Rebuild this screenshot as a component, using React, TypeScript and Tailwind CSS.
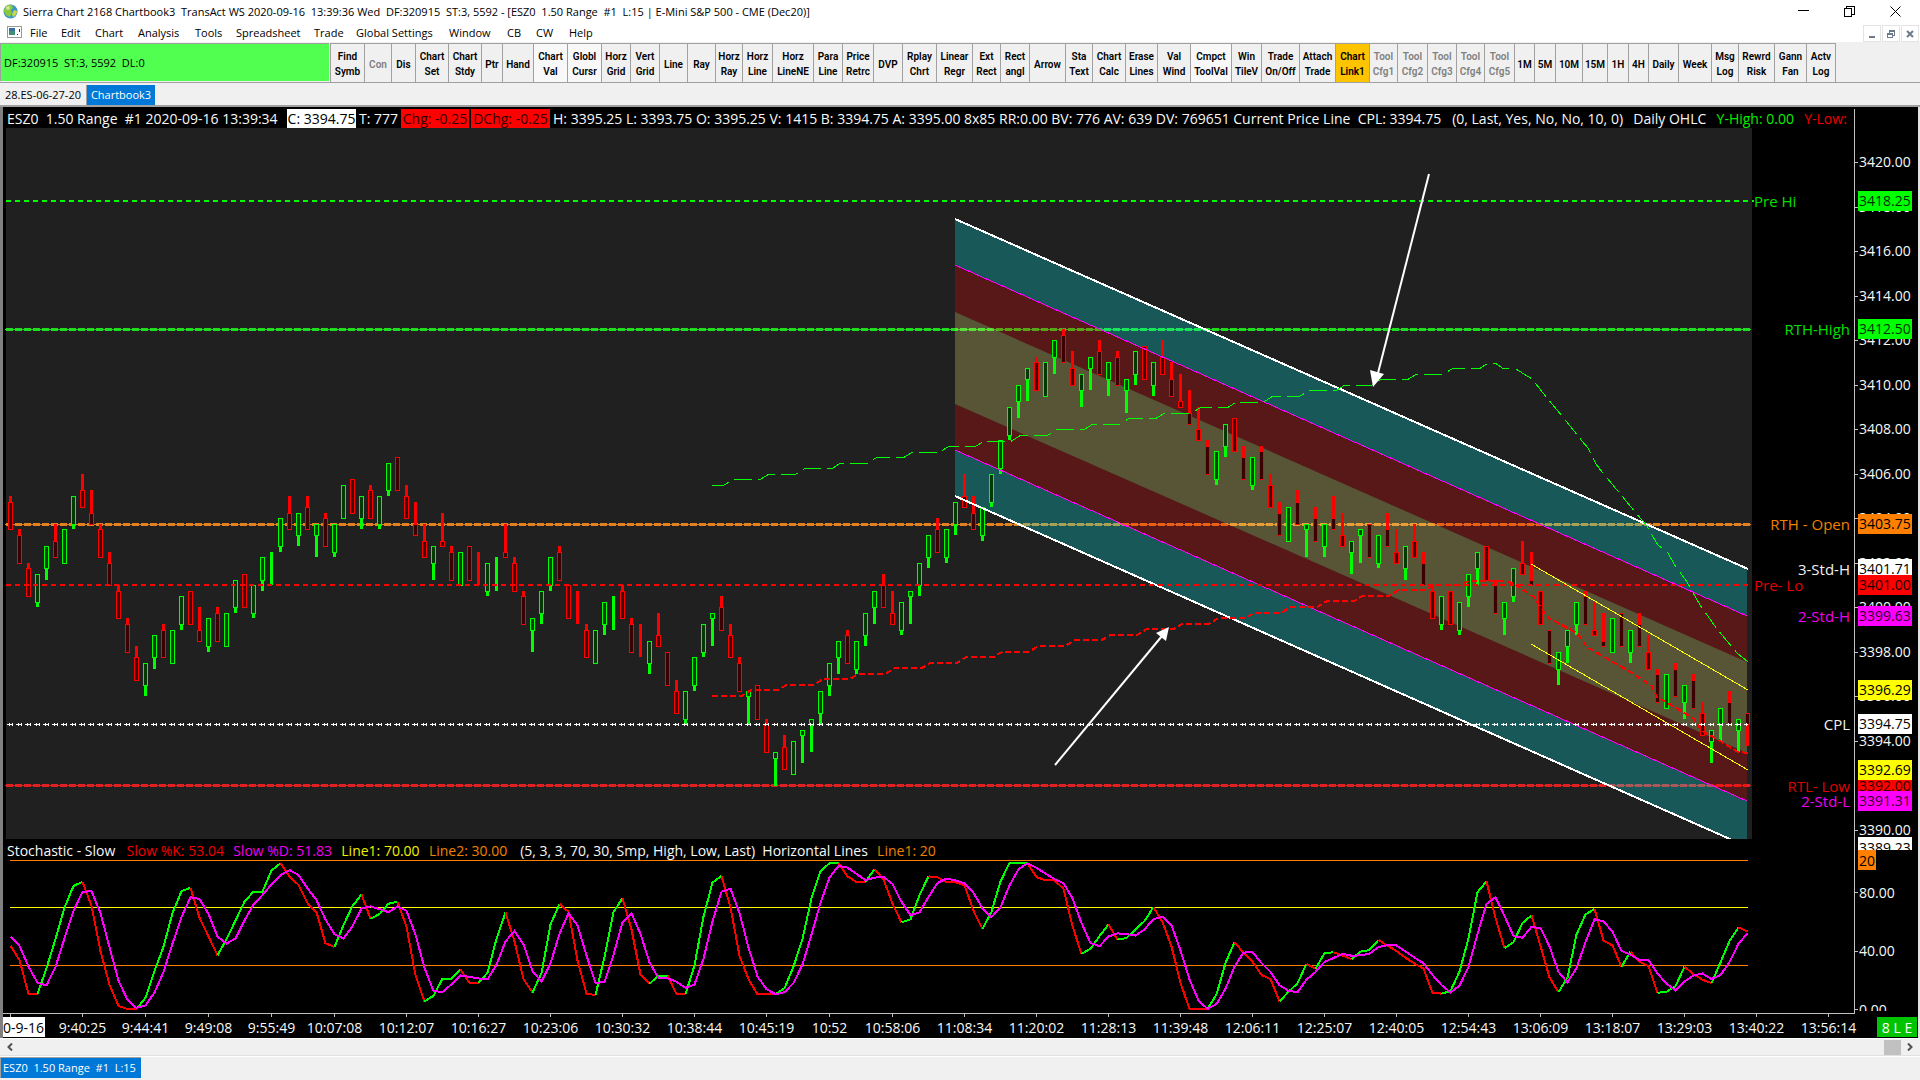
import React from "react";

/* ---------- price data: side, high (in quarter points below 3420), wick length ---------- */
const BARS =
  "R60.1 R66.1 R72.1 G74.1 G69.2 R65.3 G66.0 G60.1 R56.3 R59.4 R65.1 R70.2 R76.1 R82.1 R87.2 G90.2 G85.2 R83.1 G84.0 G78.1 " +
  "R77.0 R80.4 G82.1 R80.1 G81.0 G75.1 R74.0 G76.1 G71.2 G70.6 G64.1 R60.3 G63.2 R60.2 G65.4 R63.1 G65.1 G58.0 R57.0 G60.2 " +
  "R58.1 G60.1 G54.1 R53.0 R58.2 R61.4 R65.3 G69.3 R63.5 R69.1 G70.0 R69.0 R70.6 G72.1 G71.6 R65.5 R71.1 R77.1 G82.4 G77.2 " +
  "G71.1 R69.1 R76.0 R77.6 R83.1 G84.0 G79.2 G78.6 R76.1 R82.1 R83.6 G86.2 R81.4 R88.0 R93.2 G95.1 G89.1 G83.1 G81.5 R78.2 " +
  "R83.2 R89.1 G95.5 R94.0 R100.1 G106.5 R103.2 G104.0 G102.5 G100.5 G95.2 G90.2 G86.3 R84.1 G86.1 G81.2 G77.3 R74.2 R77.4 G79.1 " +
  "G77.5 G72.2 G67.2 R64.2 G66.1 G61.2 R56.4 R60.3 G62.1 G56.1 G50.1 G44.1 G40.3 G37.4 R35.1 G36.0 G32.3 R30.1 R34.3 G38.3 " +
  "G35.4 R32.2 G36.3 R34.1 G39.4 G34.2 R33.0 G36.2 R32.3 R36.3 R38.5 R41.4 R44.4 R50.1 G52.1 G47.2 R46.0 R51.2 G53.1 R51.1 " +
  "R56.2 R61.2 G62.0 R59.2 G65.5 R62.2 G65.2 R60.4 R63.4 G68.4 G66.5 R65.0 G67.1 R63.3 R66.4 G69.2 R65.3 R70.2 R76.1 G78.1 " +
  "R77.0 G79.1 G74.2 G70.3 R69.0 R75.1 G79.3 G73.1 R68.4 R70.5 R77.0 R84.0 G88.3 G84.3 G79.2 R77.1 R79.5 R81.5 G82.0 R81.0 " +
  "G84.2 R81.2 R85.3 R91.1 G92.0 R90.1 G94.3 R92.1 R97.2 G102.4 G98.3 R95.2 G100.4";

const bars = BARS.split(" ").map((s) => {
  const [high, wick] = s.slice(1).split(".").map(Number);
  const up = s[0] === "G";
  return { up, high, low: high + 6, wick, close: up ? high : high + 6 };
});
const allBars = [...bars, { up: false, high: 99, low: 105, wick: 4, close: 101 }];

const barX = (i: number) => 10.5 + 9 * i;
const tickY = (k: number) => Math.round(162 + k * 5.567);
const priceY = (p: number) => Math.round(162 + (3420 - p) * 22.27);
const stochY = (v: number) => 1009 - v * 1.4583;

/* ---------- slow stochastic (5, 3, 3) ---------- */
const fastK = allBars.map((b, i) => {
  const w = allBars.slice(Math.max(0, i - 4), i + 1);
  const low = Math.max(...w.map((x) => x.low));
  const high = Math.min(...w.map((x) => x.high));
  return ((low - b.close) / (low - high)) * 100;
});
const slowK = allBars.map((_, i) =>
  i < 6 ? [43.4, 33.6, 10.3, 10.3, 28, 48][i] : (fastK[i] + fastK[i - 1] + fastK[i - 2]) / 3
);
const slowD = allBars.map((_, i) =>
  i < 2 ? [49.6, 43.4][i] : (slowK[i] + slowK[i - 1] + slowK[i - 2]) / 3
);
const kRuns: { up: boolean; pts: string[] }[] = [];
slowK.forEach((v, i) => {
  if (i === 0) return;
  const prev = slowK[i - 1];
  const last = kRuns[kRuns.length - 1];
  const flat = Math.abs(v - prev) < 0.01;
  const up = flat && last ? last.up : v > prev;
  const pt = `${barX(i)},${stochY(v).toFixed(1)}`;
  if (last && last.up === up) last.pts.push(pt);
  else kRuns.push({ up, pts: [`${barX(i - 1)},${stochY(prev).toFixed(1)}`, pt] });
});
const dPoints = slowD.map((v, i) => `${barX(i)},${stochY(v).toFixed(1)}`).join(" ");

/* ---------- stepped trend lines ---------- */
function stairs(x0: number, y0: number, first: number, count: number, tail: string) {
  let d = `M${x0} ${y0}`;
  let y = y0;
  for (let i = 0; i < count; i++) {
    const x = first + 36 * i;
    d += `L${x} ${y.toFixed(1)}`;
    y -= 5.567;
    d += `L${x + 9} ${y.toFixed(1)}`;
  }
  return d + tail;
}
const upperTrend = stairs(
  712, 485.5, 723.5, 22,
  "L1495 363L1503 368.5L1515 368.5L1532 379L1543 393L1562 416L1582 441L1588 448L1596 464L1602 472L1636 513L1647 526L1653 537L1658 545L1668 553L1674 564L1687 582L1700 605L1717 629L1737 653L1748 662"
);
const lowerTrend = stairs(
  712, 696, 741.5, 20,
  "L1460 585L1470 580.5L1506 580.5L1514 584L1533 596L1541 608L1550 619L1577 633L1587 647L1627 670L1652 686L1657 697L1673 706L1694 719L1702 731L1717 739L1738 752L1749 753"
);

const priceLabels = [3420, 3418, 3416, 3414, 3412, 3410, 3408, 3406, 3404, 3402, 3400, 3398, 3396, 3394, 3390];
const priceBoxes: [number, string, string][] = [
  [3418.25, "#00ff00", "#003000"],
  [3412.5, "#00ff00", "#003000"],
  [3403.75, "#ff8000", "#000000"],
  [3401.71, "#ffffff", "#000000"],
  [3401.0, "#ff0000", "#200000"],
  [3399.63, "#ff00ff", "#300030"],
  [3396.29, "#ffff00", "#000000"],
  [3394.75, "#ffffff", "#000000"],
  [3392.0, "#ff0000", "#300000"],
  [3392.69, "#ffff00", "#000000"],
  [3391.31, "#ff00ff", "#300030"],
];
const lineNames: [string, number, string][] = [
  ["RTH-High", 3412.5, "#00e000"],
  ["RTH - Open", 3403.75, "#f08000"],
  ["3-Std-H", 3401.71, "#f0f0f0"],
  ["2-Std-H", 3399.63, "#f000f0"],
  ["CPL", 3394.75, "#f0f0f0"],
  ["RTL- Low", 3392, "#e00000"],
  ["2-Std-L", 3391.31, "#f000f0"],
];
const times: [number, string][] = [
  [8, "9:40:25"], [15, "9:44:41"], [22, "9:49:08"], [29, "9:55:49"], [36, "10:07:08"], [44, "10:12:07"],
  [52, "10:16:27"], [60, "10:23:06"], [68, "10:30:32"], [76, "10:38:44"], [84, "10:45:19"], [91, "10:52"],
  [98, "10:58:06"], [106, "11:08:34"], [114, "11:20:02"], [122, "11:28:13"], [130, "11:39:48"], [138, "12:06:11"],
  [146, "12:25:07"], [154, "12:40:05"], [162, "12:54:43"], [170, "13:06:09"], [178, "13:18:07"], [186, "13:29:03"],
  [194, "13:40:22"], [202, "13:56:14"],
];

function SessionLine({ y, color }: { y: number; color: string }) {
  return (
    <g stroke={color} fill="none">
      <path d={`M5 ${y + 0.5}H1751`} strokeWidth="1" />
      <path d={`M6 ${y + 0.5}H1751`} strokeWidth="3" strokeDasharray="7 2" />
    </g>
  );
}

function Chart() {
  return (
    <svg
      viewBox="3 128 1915 910"
      className="block h-auto w-full bg-black"
      fontFamily='"Open Sans", sans-serif'
      fontSize="14"
      role="img"
      aria-label="ESZ0 range bar chart with slow stochastic"
    >
      <defs>
        <clipPath id="plot"><rect x="6" y="128" width="1746" height="711" /></clipPath>
        <clipPath id="upperAxis"><rect x="1850" y="128" width="68" height="722" /></clipPath>
        <clipPath id="lowerAxis"><rect x="1850" y="850" width="68" height="161" /></clipPath>
      </defs>

      <rect x="6" y="128" width="1746" height="711" fill="#202020" />

      <g shapeRendering="crispEdges">
        <path d="M6 201H1754" stroke="#00ff00" strokeWidth="2" strokeDasharray="5 4" />
        <SessionLine y={329} color="#20dc20" />
        <SessionLine y={524} color="#e08020" />
        <SessionLine y={785} color="#e02020" />
      </g>

      <g clipPath="url(#plot)">
        <g fillOpacity="0.25">
          <path d="M955 218L1747 569V616L955 265ZM955 450L1747 801V847L955 496Z" fill="#00ffff" />
          <path d="M955 265L1747 616V662L955 312ZM955 404L1747 753V801L955 450Z" fill="#ff0000" />
          <path d="M955 312L1747 662V753L955 404Z" fill="#fff57d" />
        </g>

        <g shapeRendering="crispEdges" strokeWidth="1">
          {bars.map((b, i) => {
            const x = barX(i);
            const color = b.up ? "#00ff00" : "#ff0000";
            const top = b.up ? tickY(b.high) : tickY(b.high + b.wick);
            const bottom = b.up ? tickY(b.low - b.wick) : tickY(b.low);
            return (
              <g key={i}>
                {b.wick > 0 && (
                  <rect
                    x={x - 1.5}
                    y={b.up ? bottom : tickY(b.high)}
                    width="3"
                    height={b.up ? tickY(b.low) - bottom : top - tickY(b.high)}
                    fill={color}
                  />
                )}
                <rect
                  x={x - 2}
                  y={top + 0.5}
                  width="4"
                  height={bottom - top}
                  fill={b.up ? "#003c00" : "#3c0000"}
                  stroke={color}
                />
              </g>
            );
          })}
          <rect x="1745.5" y="713.5" width="4" height="11" fill="#3c0000" stroke="#ff0000" />
          <rect x="1746" y="725" width="3" height="21" fill="#ff0000" />
        </g>

        <g shapeRendering="crispEdges" fill="none">
          <path d="M955 265L1747 616M955 450L1747 801" stroke="#ff00ff" />
          <path d="M955 219L1748 569M955 496L1748 847" stroke="#ffffff" strokeWidth="2" />
          <path d="M6 585H1752" stroke="#ff0000" strokeWidth="2" strokeDasharray="5 4" />
          <path d={upperTrend} stroke="#00ff00" strokeDasharray="18 6" />
          <path d={lowerTrend} stroke="#ff0000" strokeWidth="2" strokeDasharray="6 3" />
          <path d="M1531 564L1748 690M1531 644L1748 770" stroke="#ffff00" />
          <path d="M7 724.5H1748" stroke="#ffffff" strokeDasharray="6 3" />
          <path d="M9 724.5H1748" stroke="#ffffff" strokeWidth="3" strokeDasharray="1 2 1 5" />
        </g>

        <g fill="#ffffff" stroke="none">
          <path d="M1429 174L1377 377" stroke="#ffffff" strokeWidth="2" />
          <path d="M1373 387L1370 370L1384 374Z" />
          <path d="M1055 765L1162 636" stroke="#ffffff" strokeWidth="2" />
          <path d="M1169 627L1166 641L1156 633Z" />
        </g>
      </g>

      <g shapeRendering="crispEdges" fill="none">
        <path d="M10 860.5H1748M10 965.5H1748" stroke="#ff8000" />
        <path d="M10 907.5H1748" stroke="#ffff00" />
        {kRuns.map((r, i) => (
          <polyline key={i} points={r.pts.join(" ")} stroke={r.up ? "#00ff00" : "#ff0000"} strokeWidth="2" />
        ))}
        <polyline points={dPoints} stroke="#ff00ff" strokeWidth="2" />
      </g>

      <g shapeRendering="crispEdges" stroke="#c0c0c0">
        <path d="M1854.5 128V1013M3 1013.5H1855" />
        {priceLabels.map((p) => (
          <path key={p} d={`M1855 ${priceY(p) + 0.5}h3`} />
        ))}
        {[80, 40, 0].map((v) => (
          <path key={v} d={`M1855 ${Math.round(stochY(v)) + 0.5}h3`} />
        ))}
        <path d="M10.5 1013v4" />
        {times.map(([i]) => (
          <path key={i} d={`M${barX(i)} 1013v4`} />
        ))}
      </g>

      <g fill="#f8f8f8" clipPath="url(#upperAxis)">
        {priceLabels.map((p) => (
          <text key={p} x="1859" y={priceY(p) + 5}>{p.toFixed(2)}</text>
        ))}
        {priceBoxes.map(([p, bg, fg]) => (
          <g key={p}>
            <rect x="1858" y={priceY(p) - 10} width="54" height="20" fill={bg} />
            <text x="1859" y={priceY(p) + 5} fill={fg}>{p.toFixed(2)}</text>
          </g>
        ))}
        <rect x="1858" y="837" width="54" height="20" fill="#ffffff" />
        <text x="1859" y="853" fill="#000000">3389.23</text>
      </g>
      <g fill="#f8f8f8" clipPath="url(#lowerAxis)">
        <rect x="1858" y="850" width="18" height="20" fill="#ff8000" />
        <text x="1859" y="866" fill="#000000">20</text>
        <text x="1859" y="898">80.00</text>
        <text x="1859" y="956">40.00</text>
        <text x="1859" y="1015">0.00</text>
      </g>

      <g fontSize="15">
        <text x="1754" y="207" fill="#00e000">Pre Hi</text>
        <text x="1754" y="591" fill="#e00000">Pre- Lo</text>
      </g>
      <g textAnchor="end" fontSize="15">
        {lineNames.map(([name, p, color]) => (
          <text key={name} x="1850" y={priceY(p) + 6} fill={color}>{name}</text>
        ))}
      </g>

      <g textAnchor="middle" fill="#f8f8f8">
        {times.map(([i, t]) => (
          <text key={i} x={barX(i)} y="1033">{t}</text>
        ))}
      </g>
      <rect x="3" y="1017" width="42" height="20" fill="#ffffff" />
      <text x="44" y="1033" textAnchor="end">0-9-16</text>
      <rect x="1877" y="1017" width="40" height="20" fill="#00c400" />
      <text x="1897" y="1033" textAnchor="middle" fill="#ffffff">8 L E</text>
    </svg>
  );
}

/* ---------- window chrome ---------- */
const menus: [string, string][] = [
  ["File", "w-[31px]"], ["Edit", "w-[34px]"], ["Chart", "w-[43px]"], ["Analysis", "w-[57px]"], ["Tools", "w-[41px]"],
  ["Spreadsheet", "w-[78px]"], ["Trade", "w-[42px]"], ["Global Settings", "w-[93px]"], ["Window", "w-[58px]"],
  ["CB", "w-[29px]"], ["CW", "w-[33px]"], ["Help", "w-[40px]"],
];

const tools: [string, string, string?][] = [
  ["Find Symb", "w-[34px]"], ["Con", "w-[27px]", "off"], ["Dis", "w-[24px]"], ["Chart Set", "w-[33px]"],
  ["Chart Stdy", "w-[33px]"], ["Ptr", "w-[21px]"], ["Hand", "w-[31px]"], ["Chart Val", "w-[34px]", "on"],
  ["Globl Cursr", "w-[34px]", "on"], ["Horz Grid", "w-[29px]"], ["Vert Grid", "w-[29px]"], ["Line", "w-[28px]"],
  ["Ray", "w-[28px]"], ["Horz Ray", "w-[27px]"], ["Horz Line", "w-[30px]"], ["Horz LineNE", "w-[41px]"],
  ["Para Line", "w-[29px]"], ["Price Retrc", "w-[31px]"], ["DVP", "w-[29px]"], ["Rplay Chrt", "w-[34px]"],
  ["Linear Regr", "w-[36px]"], ["Ext Rect", "w-[28px]"], ["Rect angl", "w-[29px]"], ["Arrow", "w-[36px]"],
  ["Sta Text", "w-[27px]"], ["Chart Calc", "w-[33px]"], ["Erase Lines", "w-[32px]"], ["Val Wind", "w-[33px]"],
  ["Cmpct ToolVal", "w-[41px]", "on"], ["Win TileV", "w-[30px]"], ["Trade On/Off", "w-[38px]"],
  ["Attach Trade", "w-[36px]"], ["Chart Link1", "w-[34px]", "link"], ["Tool Cfg1", "w-[28px]", "off"],
  ["Tool Cfg2", "w-[30px]", "off"], ["Tool Cfg3", "w-[29px]", "off"], ["Tool Cfg4", "w-[28px]", "off"],
  ["Tool Cfg5", "w-[30px]", "off"], ["1M", "w-[20px]"], ["5M", "w-[21px]"], ["10M", "w-[27px]"], ["15M", "w-[25px]"],
  ["1H", "w-[21px]"], ["4H", "w-[20px]"], ["Daily", "w-[30px]"], ["Week", "w-[33px]"], ["Msg Log", "w-[27px]"],
  ["Rewrd Risk", "w-[36px]"], ["Gann Fan", "w-[32px]"], ["Actv Log", "w-[29px]"],
];
const toolTone: Record<string, string> = {
  normal: "text-black",
  off: "text-[#808080]",
  on: "text-black bg-[#f8f8f8]",
  link: "text-black bg-[#ffc400]",
};

function TitleBar() {
  return (
    <div className="flex h-[22px] items-center bg-white">
      <svg className="ml-[3px] h-[15px] w-[15px]" viewBox="0 0 15 15">
        <circle cx="7.5" cy="7.5" r="7" fill="#3a93c9" />
        <path d="M3 2Q6 0 9 1L10 4L8 6L9 9L7 13Q3 12 1 8Q1 4 3 2Z" fill="#8cc63f" />
        <path d="M11 6L14 7Q14 11 10 13L9 10Z" fill="#c5d94a" />
        <circle cx="5" cy="4" r="2" fill="#e4f5c0" opacity="0.7" />
      </svg>
      <h1 className="ml-[5px] flex-1 whitespace-pre pt-px text-[11px] leading-4">
        Sierra Chart 2168 Chartbook3  TransAct WS 2020-09-16  13:39:36 Wed  DF:320915  ST:3, 5592 - [ESZ0  1.50 Range  #1  L:15 | E-Mini S&amp;P 500 - CME (Dec20)]
      </h1>
      <button aria-label="Minimize" className="flex h-full w-[46px] items-center justify-center">
        <svg className="h-[11px] w-[11px]" viewBox="0 0 11 11" shapeRendering="crispEdges"><path d="M0 4.5H11" stroke="#000" /></svg>
      </button>
      <button aria-label="Restore" className="flex h-full w-[46px] items-center justify-center">
        <svg className="h-[11px] w-[11px]" viewBox="0 0 11 11" fill="none" stroke="#000" shapeRendering="crispEdges"><path d="M.5 2.5h7v8h-7zM2.5 2.5v-2h8v8h-3" /></svg>
      </button>
      <button aria-label="Close" className="mr-[2px] flex h-full w-[46px] items-center justify-center">
        <svg className="h-[11px] w-[11px]" viewBox="0 0 11 11" stroke="#000"><path d="M.5 .5l10 10M10.5 .5l-10 10" /></svg>
      </button>
    </div>
  );
}

function MenuBar() {
  const box = "flex h-[17px] w-[18px] items-center justify-center border border-[#e4e4e4] bg-white";
  return (
    <div className="flex h-[20px] items-center bg-white">
      <svg className="ml-[7px] mr-[8px] h-[12px] w-[15px]" viewBox="0 0 15 12" shapeRendering="crispEdges">
        <rect x=".5" y=".5" width="14" height="11" fill="#fff" stroke="#9a9a9a" />
        <rect x="2" y="2" width="6" height="7" fill="#3f8f7a" />
        <rect x="2" y="2" width="6" height="3" fill="#3b6ea5" />
        <path d="M10 8.5h1M12.5 3v3" stroke="#333" />
      </svg>
      <nav className="flex flex-1 pt-[2px]">
        {menus.map(([label, w]) => (
          <button key={label} className={`${w} whitespace-nowrap text-left text-[11px] leading-4`}>{label}</button>
        ))}
      </nav>
      <div className="mr-px flex gap-px pt-[3px]">
        <button aria-label="Minimize chart" className={box}>
          <svg className="h-[8px] w-[8px]" viewBox="0 0 8 8"><path d="M1 7H7" stroke="#6b7b8c" strokeWidth="2" /></svg>
        </button>
        <button aria-label="Restore chart" className={box}>
          <svg className="h-[8px] w-[8px]" viewBox="0 0 8 8" fill="none" stroke="#6b7b8c" shapeRendering="crispEdges"><path d="M.5 3.5h5v4h-5zM0 4.5h6M2.5 3v-2.5h5v5h-2M2 1.5h6" /></svg>
        </button>
        <button aria-label="Close chart" className={box}>
          <svg className="h-[8px] w-[8px]" viewBox="0 0 8 8"><path d="M1 1l6 6M7 1l-6 6" stroke="#6b7b8c" strokeWidth="2" /></svg>
        </button>
      </div>
    </div>
  );
}

function ToolBar() {
  return (
    <div className="flex h-[41px] items-start overflow-hidden border-b border-[#a0a0a0] pt-px">
      <div className="mr-px flex h-[38px] w-[329px] shrink-0 items-center whitespace-pre border-l border-t border-[#a0a0a0] bg-[#50ff50] pl-[3px] text-[11px] leading-4">
        DF:320915  ST:3, 5592  DL:0
      </div>
      <div className="flex h-[40px] shrink-0 border-l border-t border-[#a0a0a0]">
        {tools.map(([label, w, state]) => (
          <button
            key={label}
            className={`${w} ${toolTone[state ?? "normal"]} flex shrink-0 items-center justify-center border-r border-[#a0a0a0] pt-px text-center font-[Roboto] text-[10px] font-semibold leading-[15px]`}
          >
            {label.split(" ").map((t, i) => (i === 0 ? t : <React.Fragment key={i}><br />{t}</React.Fragment>))}
          </button>
        ))}
      </div>
    </div>
  );
}

function QuoteLine() {
  return (
    <div className="flex h-[19px] bg-black text-[14px] leading-[19px] text-[#f8f8f8]">
      <div className="flex min-w-0 flex-1 overflow-hidden whitespace-pre pl-[4px]">
        <span className="w-[280px] shrink-0">ESZ0  1.50 Range  #1 2020-09-16 13:39:34</span>
        <span className="mr-[3px] w-[69px] shrink-0 bg-white text-center text-black">C: 3394.75</span>
        <span className="w-[42px] shrink-0">T: 777</span>
        <span className="mr-[2px] w-[68px] shrink-0 bg-[#ff0000] text-center text-[#300000]">Chg: -0.25</span>
        <span className="mr-[3px] w-[79px] shrink-0 bg-[#ff0000] text-center text-[#300000]">DChg: -0.25</span>
        <span className="mr-[3px] shrink-0">H: 3395.25 L: 3393.75 O: 3395.25 V: 1415 B: 3394.75 A: 3395.00 8x85 RR:0.00 BV: 776 AV: 639 DV: 769651 Current Price Line  CPL: 3394.75   (0, Last, Yes, No, No, 10, 0)</span>
        <span className="mr-[3px] shrink-0">  Daily OHLC  </span>
        <span className="mr-[3px] shrink-0 text-[#00f000]">Y-High: 0.00  </span>
        <span className="shrink-0 text-[#f00000]">Y-Low:</span>
      </div>
      <div className="w-[64px] shrink-0 border-l border-[#c0c0c0]" />
    </div>
  );
}

export default function App() {
  return (
    <div className="flex min-h-screen flex-col overflow-hidden bg-[#f0f0f0] font-['Open_Sans',sans-serif] text-black">
      <TitleBar />
      <MenuBar />
      <ToolBar />
      <div className="flex h-[24px] items-start border-b-2 border-[#a0a0a0] pt-[2px] text-[11px] leading-[20px]">
        <button className="h-[20px] w-[87px] whitespace-nowrap border-r border-[#a0a0a0] text-center">28.ES-06-27-20</button>
        <button className="h-[20px] w-[68px] bg-[#0078d7] text-center text-white">Chartbook3</button>
      </div>

      <main className="relative border-l-[3px] border-r-2 border-l-[#808080] border-r-[#e3e3e3] bg-black">
        <div className="h-[2px] bg-black" />
        <QuoteLine />
        <div className="relative">
          <Chart />
          <div className="absolute left-[4px] top-[713px] flex gap-[2px] whitespace-pre text-[14px] leading-[20px] text-[#f8f8f8]">
            <span className="mr-[2px]">Stochastic - Slow  </span>
            <span className="text-[#f00000]">Slow %K: 53.04  </span>
            <span className="text-[#f000f0]">Slow %D: 51.83  </span>
            <span className="text-[#f0f000]">Line1: 70.00  </span>
            <span className="text-[#f08000]">Line2: 30.00   </span>
            <span>(5, 3, 3, 70, 30, Smp, High, Low, Last)  Horizontal Lines  </span>
            <span className="text-[#f08000]">Line1: 20</span>
          </div>
        </div>
      </main>

      <div className="flex h-[18px] items-center justify-between border-b border-t border-b-[#e0e0e0] border-t-white pl-[3px]">
        <button aria-label="Scroll left" className="flex h-[15px] w-[13px] items-center justify-center">
          <svg className="h-[8px] w-[6px]" viewBox="0 0 6 8" fill="none" stroke="#505050" strokeWidth="2"><path d="M5 .5L1.5 4L5 7.5" /></svg>
        </button>
        <div className="flex items-center">
          <div className="h-[15px] w-[17px] bg-[#c1c1c1]" />
          <button aria-label="Scroll right" className="mr-px flex h-[15px] w-[18px] items-center justify-center">
            <svg className="h-[8px] w-[6px]" viewBox="0 0 6 8" fill="none" stroke="#505050" strokeWidth="2"><path d="M1 .5L4.5 4L1 7.5" /></svg>
          </button>
        </div>
      </div>
      <div className="flex flex-1 items-start border-t border-white">
        <button className="h-[21px] w-[141px] whitespace-pre border-l border-t border-[#a0a0a0] bg-[#0078d7] pl-[2px] text-left text-[11px] leading-[20px] text-white">ESZ0  1.50 Range  #1  L:15</button>
      </div>
    </div>
  );
}
